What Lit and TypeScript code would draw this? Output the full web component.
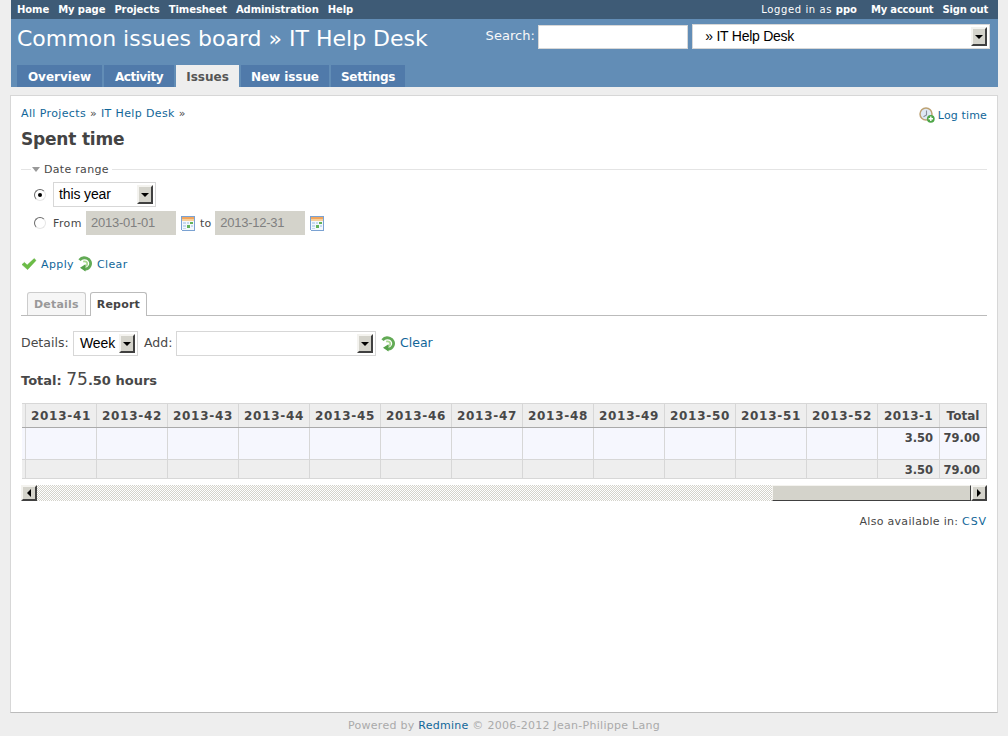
import { LitElement, html, css } from "lit";
import { customElement } from "lit/decorators.js";

const weeks = ["2013-41","2013-42","2013-43","2013-44","2013-45","2013-46","2013-47","2013-48","2013-49","2013-50","2013-51","2013-52"];
const tabs = [
  { label: "Overview", width: 85, ls: 0 },
  { label: "Activity", width: 70, ls: -0.45 },
  { label: "Issues", width: 63, ls: 0, sel: true },
  { label: "New issue", width: 88, ls: -0.07 },
  { label: "Settings", width: 74, ls: -0.35 },
];

const arrow = (dir: string) => html`<span class="btn"><span class="tri ${dir}"></span></span>`;

const calendar = html`<svg class="ic" width="16" height="16" viewBox="0 0 16 16" shape-rendering="crispEdges">
  <rect x="1" y="1" width="14" height="14" fill="#f4f8fc"/>
  <path d="M1.5 15V1.5H14.5V15H1.5" fill="none" stroke="#7aa2d2"/>
  <rect x="2" y="2" width="12" height="2" fill="#f2a65e"/>
  <rect x="2" y="4" width="12" height="2" fill="#f7cf9a"/>
  <rect x="3" y="7" width="3" height="2" fill="#c6d9ee"/><rect x="7" y="7" width="2" height="2" fill="#c6d9ee"/><rect x="10" y="7" width="3" height="2" fill="#62b25a"/>
  <rect x="3" y="10" width="3" height="2" fill="#c6d9ee"/><rect x="7" y="10" width="3" height="3" fill="#62b25a"/><rect x="11" y="10" width="2" height="2" fill="#c6d9ee"/>
  <rect x="3" y="13" width="3" height="1" fill="#c6d9ee"/>
</svg>`;

const reload = html`<svg class="ic" width="16" height="16" viewBox="0 0 16 16">
  <path d="M2.5 4.2C4 2.2 7 1.2 9.8 2.3c3.4 1.3 4.6 4.8 3.2 7.6-1.1 2.2-3.3 3.3-5.3 3.1" fill="none" stroke="#62aa55" stroke-width="2.8"/>
  <path d="M6.2 5.6c2.3-.8 4.2.6 4 2.6-.1 1.3-1 2-2.2 2.2" fill="none" stroke="#a9d88f" stroke-width="1.8"/>
  <path d="M8.5 8.2v7.3L3 11.8z" fill="#55a148"/>
</svg>`;

const check = html`<svg class="ic" width="16" height="16" viewBox="0 0 16 16">
  <path d="M1 8.6 3.4 6.4 6.2 9 13.2 2.6 15 4.4 6.6 13.6z" fill="#6bbd45" stroke="#58a838" stroke-width=".5" stroke-linejoin="round"/>
</svg>`;

const clock = html`<svg class="ic" width="16" height="16" viewBox="0 0 16 16">
  <circle cx="7" cy="7" r="6" fill="#dfe9f4" stroke="#bda274" stroke-width="1.5"/>
  <path d="M7.5 3.5V8L4.5 9.8" fill="none" stroke="#8a8f9c" stroke-width="1.1"/>
  <circle cx="11.8" cy="11.8" r="3.9" fill="#4ea648"/>
  <path d="M9.6 11.8h4.4M11.8 9.6v4.4" stroke="#fff" stroke-width="1.4"/>
</svg>`;

@customElement("app-root")
export class AppRoot extends LitElement {
  static styles = css`
    :host { display: block; width: 1008px; height: 736px; background: #eee; font-family: "DejaVu Sans", Verdana, sans-serif; font-size: 11px; color: #484848; overflow: hidden; letter-spacing: .38px; }
    a { color: #169; text-decoration: none; }
    .top { margin-left: 11px; width: 987px; box-sizing: border-box; height: 19px; background: #3e5b76; color: #fff; display: flex; justify-content: space-between; align-items: center; padding: 0 10px 1px 6px; font-size: 10px; letter-spacing: 0; }
    .top .nav { display: flex; gap: 9px; font-weight: bold; letter-spacing: -.08px; }
    .top .right { display: flex; gap: 14px; }
    .top .log { letter-spacing: .6px; }
    .top .log b { letter-spacing: 0; }
    .top .acts { display: flex; gap: 9px; font-weight: bold; letter-spacing: -.2px; }
    .head { margin-left: 11px; width: 987px; box-sizing: border-box; height: 68px; background: #628db6; color: #f8f8f8; display: flex; flex-direction: column; justify-content: space-between; }
    .headrow { display: flex; justify-content: space-between; padding: 5px 8px 0 6px; }
    h1 { margin: 0; font-size: 22px; font-weight: normal; color: #fff; line-height: 30px; letter-spacing: 0; }
    .search { display: flex; align-items: center; gap: 4px; height: 25px; font-size: 13px; letter-spacing: .05px; }
    .search .lbl { margin: 0 -1px 2px 0; }
    .box { background: #fff; border: 1px solid #d7d7d7; box-sizing: border-box; }
    .select { display: flex; align-items: center; justify-content: space-between; background: #fff; border: 1px solid #d7d7d7; box-sizing: border-box; height: 25px; padding: 2px; font-family: "Liberation Sans", Arial, sans-serif; font-size: 14px; color: #000; letter-spacing: -.12px; flex: none; }
    .select > span.v { padding: 0 0 2px 3px; white-space: pre; }
    .select > span.v.wk { padding-left: 4px; }
    .select > span.v.proj { letter-spacing: -.25px; }
    .btn { width: 16px; height: 16px; box-sizing: border-box; background: #d4d3cb; border: 2px solid; border-color: #f4f3ef #404040 #404040 #f4f3ef; display: flex; align-items: center; justify-content: center; flex: none; }
    .select .btn { height: 19px; margin-left: auto; }
    .tri { width: 0; height: 0; border: 4px solid transparent; }
    .tri.down { border-top-color: #000; border-bottom: 0; }
    .tri.left { border-right-color: #000; border-left: 0; }
    .tri.right { border-left-color: #000; border-right: 0; }
    .tabs { display: flex; gap: 2px; padding-left: 6px; }
    .tabs span { height: 22px; line-height: 24px; text-align: center; font-size: 12px; font-weight: bold; background: #507aaa; color: #fff; }
    .tabs span.sel { background: #eee; color: #555; }
    .content { margin: 8px 0 0 10px; width: 988px; height: 618px; box-sizing: border-box; background: #fff; border: 1px solid #d7d7d7; border-bottom-color: #bbb; padding: 9px 10px 10px; }
    .crumbrow { display: flex; justify-content: space-between; align-items: center; height: 16px; }
    .logtime { display: flex; align-items: center; gap: 3px; margin-top: 4px; letter-spacing: .15px; }
    h2 { margin: 6px 0 0; font-size: 17px; line-height: 24px; color: #444; letter-spacing: -.2px; }
    .fs { margin-top: 12px; }
    .legend { display: flex; align-items: center; height: 12px; letter-spacing: .3px; }
    .legend::before { content: ""; width: 10px; border-top: 1px solid #e4e4e4; }
    .legend::after { content: ""; flex: 1; border-top: 1px solid #e4e4e4; margin-left: 3px; }
    .legend .t { border: 4px solid transparent; border-top: 5px solid #999; border-bottom: 0; margin: 0 4px 0 1px; }
    .range { padding: 7px 0 0 13px; display: flex; flex-direction: column; gap: 4px; }
    .row { display: flex; align-items: center; }
    .radio { width: 12px; height: 12px; border-radius: 50%; box-sizing: border-box; background: #fff; border: 1px solid; border-color: #6a6a6a #e6e6e6 #e6e6e6 #6a6a6a; margin-right: 7px; display: flex; align-items: center; justify-content: center; }
    .radio.on::after { content: ""; width: 4px; height: 4px; border-radius: 50%; background: #000; }
    .from { width: 33px; }
    .date { width: 90px; height: 24px; background: #d4d3cb; color: #808080; font-family: "Liberation Sans", Arial, sans-serif; font-size: 13px; line-height: 24px; padding-left: 5px; box-sizing: border-box; letter-spacing: -.25px; }
    .calgap { margin-left: 4px; }
    .to { margin: 0 4px; letter-spacing: .1px; }
    .ic { flex: none; display: block; }
    .actions { display: flex; align-items: center; margin-top: 21px; }
    .apply { margin: 0 3px 0 4px; }
    .clear { margin-left: 4px; }
    .restabs { display: flex; gap: 4px; margin-top: 20px; padding-left: 6px; height: 23px; border-bottom: 1px solid #bbb; letter-spacing: .2px; }
    .restabs span { height: 23px; box-sizing: border-box; border: 1px solid #ccc; border-bottom: 0; border-radius: 3px 3px 0 0; padding: 0 6px; line-height: 23px; font-weight: bold; background: #f6f6f6; color: #999; }
    .restabs span.sel { height: 24px; background: #fff; color: #444; border-color: #bbb; }
    .query { display: flex; align-items: center; margin-top: 15px; font-size: 12.5px; height: 25px; letter-spacing: .02px; }
    .query .lbl1 { width: 52px; margin-bottom: 2px; }
    .query .lbl2 { width: 32px; margin: 0 0 2px 6px; }
    .query .ic { margin-left: 4px; }
    .query a { letter-spacing: 0; margin-bottom: 2px; }
    .total { margin-top: 13px; font-size: 13px; font-weight: bold; line-height: 20px; letter-spacing: 0; }
    .total b { font-size: 17px; font-weight: normal; }
    .scroll { display: flex; justify-content: flex-end; overflow: hidden; margin-top: 12px; }
    table { border-collapse: collapse; flex: none; table-layout: fixed; width: 965px; }
    th { background: #eee; height: 24px; border: 1px solid #d7d7d7; border-bottom: 1px solid #aaa; padding: 1px 0 0; font-size: 12px; font-weight: bold; color: #484848; box-sizing: border-box; white-space: nowrap; letter-spacing: 0; width: 71px; }
    th.w { letter-spacing: .7px; }
    th.cut { width: 4px; border-left: 0; }
    th.last { width: 62px; letter-spacing: .4px; }
    th.tot { width: 47px; }
    td { border: 1px solid #d7d7d7; text-align: right; font-size: 11.5px; font-weight: bold; padding: 0 6px 0 0; color: #484848; white-space: nowrap; letter-spacing: 0; }
    td.cut { border-left: 0; }
    .r1 td { background: #f6f7fe; height: 32px; vertical-align: top; padding-top: 3px; box-sizing: border-box; }
    .r2 td { background: #eee; height: 19px; box-sizing: border-box; padding-top: 1px; }
    .sb { display: flex; height: 16px; margin-top: 6px; background: repeating-conic-gradient(#d4d3cb 0 25%, #fff 0 50%) 0 0 / 2px 2px; }
    .thumb { margin-left: auto; width: 199px; height: 16px; box-sizing: border-box; background: #d4d3cb; border: 1px solid; border-color: #f4f3ef #404040 #404040 #f4f3ef; }
    .other { text-align: right; margin-top: 14px; letter-spacing: .3px; }
    .other a { letter-spacing: .9px; }
    .foot { text-align: center; color: #aaa; font-size: 11px; line-height: 25px; letter-spacing: .27px; }
  `;

  render() {
    const cells = weeks.map(() => html`<td></td>`);
    return html`
      <div class="top">
        <div class="nav"><span>Home</span><span>My page</span><span>Projects</span><span>Timesheet</span><span>Administration</span><span>Help</span></div>
        <div class="right"><span class="log">Logged in as <b>ppo</b></span><span class="acts"><span>My account</span><span>Sign out</span></span></div>
      </div>
      <div class="head">
        <div class="headrow">
          <h1>Common issues board » IT Help Desk</h1>
          <div class="search"><span class="lbl">Search:</span>
            <div class="box" style="width:150px;height:24px"></div>
            <div class="select" style="width:298px"><span class="v proj">  » IT Help Desk</span>${arrow("down")}</div>
          </div>
        </div>
        <div class="tabs">${tabs.map((t) => html`<span class=${t.sel ? "sel" : ""} style="width:${t.width}px;letter-spacing:${t.ls}px">${t.label}</span>`)}</div>
      </div>
      <div class="content">
        <div class="crumbrow">
          <span><a>All Projects</a> » <a>IT Help Desk</a> »</span>
          <span class="logtime">${clock}<a>Log time</a></span>
        </div>
        <h2>Spent time</h2>
        <div class="fs">
          <div class="legend"><span class="t"></span>Date range</div>
          <div class="range">
            <div class="row"><span class="radio on"></span><div class="select" style="width:103px"><span class="v">this year</span>${arrow("down")}</div></div>
            <div class="row"><span class="radio"></span><span class="from">From</span><div class="date">2013-01-01</div><span class="calgap">${calendar}</span><span class="to">to</span><div class="date">2013-12-31</div><span class="calgap">${calendar}</span></div>
          </div>
        </div>
        <div class="actions">${check}<a class="apply">Apply</a>${reload}<a class="clear">Clear</a></div>
        <div class="restabs"><span>Details</span><span class="sel">Report</span></div>
        <div class="query"><span class="lbl1">Details:</span><div class="select" style="width:65px"><span class="v wk">Week</span>${arrow("down")}</div><span class="lbl2">Add:</span><div class="select" style="width:200px">${arrow("down")}</div>${reload}<a class="clear">Clear</a></div>
        <div class="total">Total: <b>75</b>.50 hours</div>
        <div class="scroll">
          <table>
            <tr><th class="cut"></th>${weeks.map((w) => html`<th class="w">${w}</th>`)}<th class="last">2013-1</th><th class="tot">Total</th></tr>
            <tr class="r1"><td class="cut"></td>${cells}<td>3.50</td><td>79.00</td></tr>
            <tr class="r2"><td class="cut"></td>${cells}<td>3.50</td><td>79.00</td></tr>
          </table>
        </div>
        <div class="sb">${arrow("left")}<span class="thumb"></span>${arrow("right")}</div>
        <div class="other">Also available in: <a>CSV</a></div>
      </div>
      <div class="foot">Powered by <a>Redmine</a> © 2006-2012 Jean-Philippe Lang</div>
    `;
  }
}
